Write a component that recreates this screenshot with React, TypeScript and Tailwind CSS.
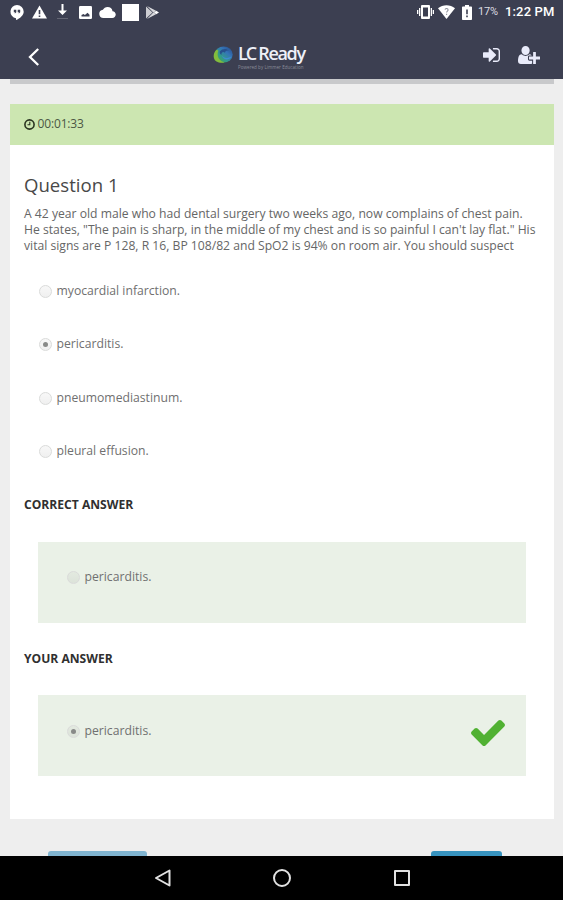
const options = [
  { label: "myocardial infarction.", checked: false },
  { label: "pericarditis.", checked: true },
  { label: "pneumomediastinum.", checked: false },
  { label: "pleural effusion.", checked: false },
];

const questionLines = [
  "A 42 year old male who had dental surgery two weeks ago, now complains of chest pain.",
  "He states, \"The pain is sharp, in the middle of my chest and is so painful I can't lay flat.\" His",
  "vital signs are P 128, R 16, BP 108/82 and SpO2 is 94% on room air. You should suspect",
];

function StatusBar() {
  return (
    <div className="flex h-6 items-center text-white">
      {/* Notifications */}
      <svg className="ml-[10px] h-[15px] w-[14px]" viewBox="0 0 14 15" fill="currentColor">
        <path d="M7 0a6.7 6.7 0 0 0-1 13.3V15c4-1.6 7.7-4.8 7.7-8.3A6.7 6.7 0 0 0 7 0z" />
        <path d="M3.8 4.8h2.5v2.5L5.2 8.3H4.5l.6-1H3.8zM7.7 4.8h2.5v2.5L9.1 8.3h-.7l.6-1H7.7z" fill="#3c3f51" />
      </svg>
      <svg className="ml-2 h-[14px] w-[15px]" viewBox="0 0 15 14" fill="currentColor">
        <path d="M7.5 0.5L15 13.5H0z" />
        <path d="M6.7 5h1.6v4.2H6.7zM6.7 10.4h1.6V12H6.7z" fill="#3c3f51" />
      </svg>
      <svg className="ml-[10px] h-4 w-[11px]" viewBox="0 0 11 16" fill="currentColor">
        <path d="M4.5 0h2v6.5H10L5.5 11 1 6.5h3.5z" />
        <path d="M0 14h11v1H0z" opacity=".2" />
      </svg>
      <svg className="ml-[11px] h-[13px] w-[13px]" viewBox="0 0 13 13" fill="currentColor">
        <rect width="13" height="13" rx="1.2" />
        <path d="M2.5 10.5V9l2-1 1.4 1 2.6-2.3 2 2v1.8z" fill="#3c3f51" />
      </svg>
      <svg className="ml-[7px] h-[11px] w-[17px]" viewBox="0 0 24 16" fill="currentColor">
        <path d="M19.35 6.04A7.49 7.49 0 0 0 12 0C9.11 0 6.6 1.64 5.35 4.04A5.994 5.994 0 0 0 0 10c0 3.31 2.69 6 6 6h13c2.76 0 5-2.24 5-5 0-2.64-2.05-4.78-4.65-4.96z" />
      </svg>
      <div className="ml-[6px] h-[17px] w-[17px] bg-white" />
      <svg className="ml-[7px] h-[13px] w-[13px]" viewBox="0 0 13 13" fill="currentColor">
        <path d="M0 .5v12L6.5 6.5z" opacity=".75" />
        <path d="M1 0l9 4.8-2.5 2zM1 13l9-4.8-2.5-2z" opacity=".8" />
        <path d="M10.2 4.8L13 6.5l-2.8 1.7L8 6.5z" />
      </svg>

      {/* System */}
      <svg className="ml-auto h-[14px] w-[17px]" viewBox="0 0 17 14" fill="currentColor">
        <path fillRule="evenodd" d="M5 0h7a1 1 0 0 1 1 1v12a1 1 0 0 1-1 1H5a1 1 0 0 1-1-1V1a1 1 0 0 1 1-1zm1 2.5v9h5v-9z" />
        <path d="M2 3h1.3v8H2zM0 5h1.3v4H0zM13.7 3H15v8h-1.3zM15.7 5H17v4h-1.3z" />
      </svg>
      <svg className="ml-1 h-[14px] w-[17px]" viewBox="0 0 17 14">
        <path d="M8.5 14L0 3.2C4.8-.9 12.2-.9 17 3.2z" fill="currentColor" />
        <path d="M7 4.7c.3-1.7 3.1-1.5 3.1.2 0 1.2-1.5 1.2-1.5 2.6M8.6 8.7v1.2" stroke="#8f919b" strokeWidth="1.1" fill="none" />
      </svg>
      <svg className="ml-[7px] h-[15px] w-[10px]" viewBox="0 0 10 15" fill="currentColor">
        <path d="M3 0h4v1.5h2.2q.8 0 .8.8v12q0 .7-.8.7H.8q-.8 0-.8-.7v-12q0-.8.8-.8H3z" />
        <path d="M4.2 4.5h1.6v4.7H4.2zM4.2 10.6h1.6v1.6H4.2z" fill="#3c3f51" />
      </svg>
      <span className="ml-[6px] w-[27px] font-[Roboto] text-[11px] leading-6 tracking-[-0.2px] text-[#dddde2]">17%</span>
      <span className="w-[50px] whitespace-nowrap font-[Roboto] text-[13px] font-medium leading-6 tracking-[0.15px]">1:22 PM</span>
      <span className="w-2" />
    </div>
  );
}

function Logo() {
  return (
    <div className="flex items-start">
      <svg className="mt-1 h-[17px] w-5" viewBox="0 0 20 17">
        <defs>
          <linearGradient id="swirl" x1="0" y1="1" x2="1" y2="0">
            <stop offset="0" stopColor="#50a83c" />
            <stop offset=".35" stopColor="#329c86" />
            <stop offset=".65" stopColor="#3474b8" />
            <stop offset="1" stopColor="#274580" />
          </linearGradient>
        </defs>
        <ellipse cx="10.7" cy="8.5" rx="9" ry="8" fill="url(#swirl)" />
        <path d="M3.4 3.8C-.7 8-.4 15 5.8 16.4 8 17 10 16.8 11.5 16.2 6 15 3.2 10 5.4 4.5z" fill="#83bd3d" />
        <path d="M6.8 5.5C9 2.6 13.6 2.2 16 4.6 13.3 4 12 5.2 12 6.8 10 5.2 8.3 6.5 8.4 9 7.2 8 6.6 6.9 6.8 5.5z" fill="#28508c" />
        <path d="M8.6 9.6c2.2 2.8 6.3 3.2 9.9 1-2.2 4-7.8 4.2-9.9-1z" fill="#3f8bd0" />
      </svg>
      <div className="ml-[5px] w-[67px] whitespace-nowrap text-[#eef0f8]">
        <div className="flex h-[22px] items-center text-[18px] font-semibold leading-[18px]">
          <span className="tracking-[-2px]">LC</span>
          <span className="ml-[3px] tracking-[-1.3px]">Ready</span>
        </div>
        <div className="mt-[1px] h-[5px] text-[4.5px] leading-[5px] tracking-[0.05px] text-[#8b8d99]">Powered by Limmer Education</div>
      </div>
    </div>
  );
}

function Header() {
  return (
    <header className="h-[79px] shrink-0 bg-[#3c3f51]">
      <StatusBar />
      <div className="flex h-[55px] items-start">
        <div className="flex w-[213px] pl-7 pt-6">
          <svg className="h-[18px] w-3" viewBox="0 0 12 18" fill="none" stroke="#fff" strokeWidth="2.3">
            <path d="M10.2 1L2 9l8.2 8" />
          </svg>
        </div>
        <div className="pt-[18px]">
          <Logo />
        </div>
        <div className="ml-auto flex items-start pr-[23px] text-[#e9ebfa]">
          <svg className="mt-6 h-[14px] w-[17px]" viewBox="128 256 1536 1280" preserveAspectRatio="none" fill="currentColor">
            <path d="M1312 896q0 26-19 45l-544 544q-19 19-45 19t-45-19-19-45v-288h-448q-26 0-45-19t-19-45v-384q0-26 19-45t45-19h448v-288q0-26 19-45t45-19 45 19l544 544q19 19 19 45zm352-352v704q0 119-84.5 203.5t-203.5 84.5h-320q-13 0-22.5-9.5t-9.5-22.5q0-4-1-20t-.5-26.5 3-23.5 10-19.5 20.5-6.5h320q66 0 113-47t47-113v-704q0-66-47-113t-113-47h-312l-11.5-1-11.5-3-8-5.5-7-9-2-13.5q0-4-1-20t-.5-26.5 3-23.5 10-19.5 20.5-6.5h320q119 0 203.5 84.5t84.5 203.5z" />
          </svg>
          <svg className="ml-[18px] mt-[22px] h-[18px] w-[22px]" viewBox="0 128 2048 1536" preserveAspectRatio="none" fill="currentColor">
            <path d="M704 896q-159 0-271.5-112.5t-112.5-271.5 112.5-271.5 271.5-112.5 271.5 112.5 112.5 271.5-112.5 271.5-271.5 112.5zm960 128h352q13 0 22.5 9.5t9.5 22.5v192q0 13-9.5 22.5t-22.5 9.5h-352v352q0 13-9.5 22.5t-22.5 9.5h-192q-13 0-22.5-9.5t-9.5-22.5v-352h-352q-13 0-22.5-9.5t-9.5-22.5v-192q0-13 9.5-22.5t22.5-9.5h352v-352q0-13 9.5-22.5t22.5-9.5h192q13 0 22.5 9.5t9.5 22.5v352zm-736 224q0 52 38 90t90 38h256v238q-68 50-171 50h-874q-121 0-194-69t-73-190q0-53 3.5-103.5t14-109 26.5-108.5 43-97.5 62-81 85.5-53.5 111.5-20q19 0 39 17 79 61 154.5 91.5t164.5 30.5 164.5-30.5 154.5-91.5q20-17 39-17 132 0 217 96h-223q-52 0-90 38t-38 90v192z" />
          </svg>
        </div>
      </div>
    </header>
  );
}

function Radio({ checked }: { checked: boolean }) {
  return (
    <span className="mt-1 flex h-[13px] w-[13px] shrink-0 items-center justify-center rounded-full border border-[#dadbda] bg-linear-to-b from-black/3 to-black/6">
      {checked && <span className="h-[5px] w-[5px] rounded-full bg-[#888a88]" />}
    </span>
  );
}

function Option({ label, checked }: { label: string; checked: boolean }) {
  return (
    <div className="flex h-5 items-start text-[12.2px] leading-5 text-[#707070]">
      <Radio checked={checked} />
      <span className="ml-[5px] whitespace-nowrap">{label}</span>
    </div>
  );
}

export default function App() {
  return (
    <div className="flex h-[900px] w-[563px] flex-col overflow-hidden bg-[#eeeeee] font-['Open_Sans',sans-serif]">
      <Header />
      <main className="flex min-h-0 flex-1 flex-col overflow-hidden pl-[9.5px] pr-[9px]">
        <div className="h-[5px] shrink-0 bg-[#c8c9cb]" />
        <div className="mt-[19.5px] flex h-[41.5px] shrink-0 items-center bg-[#cce6b1] pl-[14px] text-[12px] text-[#4b5744]">
          <svg className="mr-[3px] h-[11px] w-[11px]" viewBox="0 0 11 11" fill="none" stroke="#293320">
            <circle cx="5.5" cy="5.5" r="4.6" strokeWidth="1.6" />
            <path d="M5.8 2.8v3H3.5" strokeWidth="1.1" />
          </svg>
          <span className="tracking-[-0.15px]">00:01:33</span>
        </div>

        <section className="h-[674px] shrink-0 bg-white pl-[14.5px] pr-7">
          <h1 className="pt-[26px] text-[18.6px] leading-7 text-[#484848]">Question 1</h1>
          <div className="mt-[7px] text-[12.17px] leading-4 text-[#666]">
            {questionLines.map((line) => (
              <p key={line} className="whitespace-nowrap">{line}</p>
            ))}
          </div>

          <div className="mt-[26.5px] flex flex-col gap-[33.5px] pl-[14.5px]">
            {options.map((option) => (
              <Option key={option.label} label={option.label} checked={option.checked} />
            ))}
          </div>

          <h2 className="mt-[33.5px] text-[12.1px] font-bold leading-5 text-[#303030]">CORRECT ANSWER</h2>
          <div className="ml-[14px] mt-[27px] h-[81px] bg-[#eaf1e7] pl-[28.5px] pt-[25px]">
            <Option label="pericarditis." checked={false} />
          </div>

          <h2 className="mt-[26px] text-[12.1px] font-bold leading-5 text-[#303030]">YOUR ANSWER</h2>
          <div className="ml-[14px] mt-[26.5px] flex h-[81px] items-start justify-between bg-[#eaf1e7] pl-[28.5px] pr-[21px] pt-[25px]">
            <div className="pt-[1px]">
              <Option label="pericarditis." checked />
            </div>
            <svg className="h-[26px] w-[34px]" viewBox="121 334 1550 1188" fill="#50b132">
              <path d="M1671 566q0 40-28 68l-724 724-136 136q-28 28-68 28t-68-28l-136-136-362-362q-28-28-28-68t28-68l136-136q28-28 68-28t68 28l294 295 656-657q28-28 68-28t68 28l136 136q28 28 28 68z" />
            </svg>
          </div>
        </section>

        {/* Previous / next buttons, cut off by the navigation bar */}
        <div className="mt-8 flex shrink-0 justify-between pl-[38px] pr-[52px]">
          <div className="h-9 w-[99px] rounded-[3px] bg-[#80b4d0]" />
          <div className="h-9 w-[71px] rounded-[3px] bg-[#3793bf]" />
        </div>
      </main>

      <nav className="flex h-11 shrink-0 items-center bg-black pl-[154px]">
        <svg className="h-[18px] w-[17px]" viewBox="0 0 17 18" fill="none" stroke="#e2e2e2" strokeWidth="2" strokeLinejoin="round">
          <path d="M15.5 1.5v15L2 9z" />
        </svg>
        <div className="ml-[102px] h-[18px] w-[18px] rounded-full border-2 border-[#e2e2e2]" />
        <div className="ml-[103px] h-4 w-4 rounded-[1px] border-2 border-[#e2e2e2]" />
      </nav>
    </div>
  );
}
